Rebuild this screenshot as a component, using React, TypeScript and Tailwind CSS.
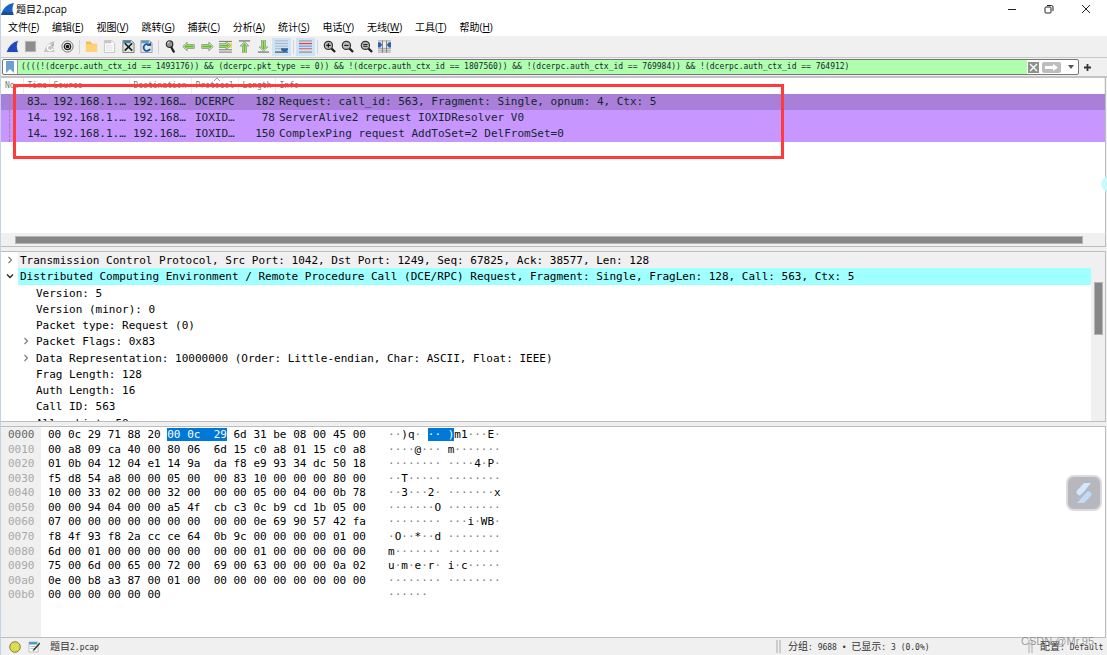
import React, { useState } from 'react';

const MENUS = [
  { label: '文件', hotkey: 'F' },
  { label: '编辑', hotkey: 'E' },
  { label: '视图', hotkey: 'V' },
  { label: '跳转', hotkey: 'G' },
  { label: '捕获', hotkey: 'C' },
  { label: '分析', hotkey: 'A' },
  { label: '统计', hotkey: 'S' },
  { label: '电话', hotkey: 'Y' },
  { label: '无线', hotkey: 'W' },
  { label: '工具', hotkey: 'T' },
  { label: '帮助', hotkey: 'H' },
];

const PACKETS = [
  { time: '83…', source: '192.168.1.…', dest: '192.168…', protocol: 'DCERPC', length: 182, info: 'Request: call_id: 563, Fragment: Single, opnum: 4, Ctx: 5' },
  { time: '14…', source: '192.168.1.…', dest: '192.168…', protocol: 'IOXID…', length: 78, info: 'ServerAlive2 request IOXIDResolver V0' },
  { time: '14…', source: '192.168.1.…', dest: '192.168…', protocol: 'IOXID…', length: 150, info: 'ComplexPing request AddToSet=2 DelFromSet=0' },
];

const FIELDS = [
  { text: 'Version: 5' },
  { text: 'Version (minor): 0' },
  { text: 'Packet type: Request (0)' },
  { text: 'Packet Flags: 0x83', expandable: true },
  { text: 'Data Representation: 10000000 (Order: Little-endian, Char: ASCII, Float: IEEE)', expandable: true },
  { text: 'Frag Length: 128' },
  { text: 'Auth Length: 16' },
  { text: 'Call ID: 563' },
  { text: 'Alloc hint: 50' },
];

const HEX_ROWS = [
  '00 0c 29 71 88 20 00 0c 29 6d 31 be 08 00 45 00',
  '00 a8 09 ca 40 00 80 06 6d 15 c0 a8 01 15 c0 a8',
  '01 0b 04 12 04 e1 14 9a da f8 e9 93 34 dc 50 18',
  'f5 d8 54 a8 00 00 05 00 00 83 10 00 00 00 80 00',
  '10 00 33 02 00 00 32 00 00 00 05 00 04 00 0b 78',
  '00 00 94 04 00 00 a5 4f cb c3 0c b9 cd 1b 05 00',
  '07 00 00 00 00 00 00 00 00 00 0e 69 90 57 42 fa',
  'f8 4f 93 f8 2a cc ce 64 0b 9c 00 00 00 00 01 00',
  '6d 00 01 00 00 00 00 00 00 00 01 00 00 00 00 00',
  '75 00 6d 00 65 00 72 00 69 00 63 00 00 00 0a 02',
  '0e 00 b8 a3 87 00 01 00 00 00 00 00 00 00 00 00',
  '00 00 00 00 00 00',
];

// Selected byte range, inclusive
const SEL_START = 6;
const SEL_END = 8;

const mono = "font-['DejaVu_Sans_Mono','Noto_Sans_CJK_SC',monospace]";
const ui = "font-['Open_Sans','Noto_Sans_CJK_SC',sans-serif]";

const Icon: React.FC<{ children: React.ReactNode }> = ({ children }) => (
  <svg viewBox="0 0 14 14" className="w-[13px] h-[13px]" fill="none" aria-hidden="true">{children}</svg>
);

const Tool: React.FC<{ label: string; active?: boolean; children: React.ReactNode }> = ({ label, active, children }) => (
  <button aria-label={label} className={`flex h-[18px] items-center justify-center ${active ? 'bg-[#cce4f7]' : 'hover:bg-[#dcebf7]'}`}>
    <Icon>{children}</Icon>
  </button>
);

const Divider = () => (
  <div className="flex w-[5px] justify-center"><div className="h-[14px] w-px bg-[#d4d4d4]" /></div>
);

const Lens: React.FC<{ sign: React.ReactNode }> = ({ sign }) => (
  <>
    <path d="M9 9l4 4" stroke="#222" strokeWidth="2.4" />
    <circle cx="5.8" cy="5.8" r="4.4" fill="#b9bdbd" stroke="#333" strokeWidth="1.3" />
    {sign}
  </>
);

// Green arrow with a pale bevel, turned to point the given way
const Arrow: React.FC<{ turn?: number }> = ({ turn = 0 }) => (
  <g transform={`rotate(${turn} 7 7)`}>
    <path d="M.8 7l4.700-4.500v2.500H13.200v4H5.500v2.500z" fill="#e4f5d6" stroke="#7c8a78" strokeWidth=".9" strokeLinejoin="round" />
    <path d="M2.200 7l2.600-2.500v1.500H12.400v2H4.800v1.500z" fill="#5cc412" />
  </g>
);

const Toolbar = () => (
  <div className="flex h-[22px] flex-none items-center border-b border-[#c8c8c8] bg-[#f0f0f0] pl-[2px]">
    <div className="grid w-[74px] grid-cols-4">
      <Tool label="Start capture">
        <path d="M0 13.500C2 6 6 2 14 0c-2.500 4-2.500 9 0 13.500z" fill="#fff" stroke="#ccc" strokeWidth=".5" />
        <path d="M.8 13C3 6.500 7 2.500 13 .8c-1.800 4-1.800 8 0 12.200z" fill="#2348bd" />
      </Tool>
      <Tool label="Stop capture"><rect x="1.500" y="1.500" width="11" height="11" fill="#8d8d8d" stroke="#b5b5b5" /></Tool>
      <Tool label="Restart capture">
        <path d="M1 13C3 6 7 2 12.500 1c-2 4-2 8 0 12z" fill="#c4c4c4" />
        <path d="M10 6.500A3 3 0 1 0 10.500 9.500" stroke="#fff" strokeWidth="1.500" />
        <path d="M8 6.500h3.500V3z" fill="#aaa" />
      </Tool>
      <Tool label="Capture options">
        <circle cx="7" cy="7" r="6" fill="#fafafa" stroke="#555" strokeWidth=".9" />
        <circle cx="7" cy="7" r="3.400" fill="#fff" stroke="#222" strokeWidth="1.500" />
        <circle cx="7" cy="7" r="1.900" fill="#111" />
      </Tool>
    </div>
    <Divider />
    <div className="grid w-[74px] grid-cols-4">
      <Tool label="Open">
        <path d="M1 1.500h5L7.500 4H13v8.500H1z" fill="#f3bd50" />
        <path d="M1 4.500h12v8H1z" fill="#ffd374" />
      </Tool>
      <Tool label="Save">
        <path d="M1.500 .5h8l3 3v10h-11z" fill="#fafafa" stroke="#c4c4c4" />
        <path d="M2 1h7v2.500H2z" fill="#c5c5c5" />
        <path d="M3.500 6h7M3.500 8.500h7M3.500 11h7" stroke="#cfcfcf" strokeDasharray="1.500 .7" />
      </Tool>
      <Tool label="Close">
        <path d="M1 .5h9l3 3v10H1z" fill="#dfe7e2" stroke="#777" />
        <path d="M1.500 1h8v2.500h-8z" fill="#3d86a8" />
        <path d="M3 3.500l8 8M11 3.500l-8 8" stroke="#1c1c1c" strokeWidth="1.800" />
      </Tool>
      <Tool label="Reload">
        <path d="M1 .5h9l3 3v10H1z" fill="#e3e8ec" stroke="#999" />
        <path d="M1.500 1h8v2.500h-8z" fill="#4f9bcb" />
        <path d="M10 5.500A3.600 3.600 0 1 0 10.800 9.500" stroke="#17569e" strokeWidth="1.900" />
        <path d="M7.500 6.500H12V2z" fill="#17569e" />
      </Tool>
    </div>
    <Divider />
    <div className="grid w-[130px] grid-cols-7">
      <Tool label="Find">
        <circle cx="6" cy="4.500" r="3.500" fill="#8e9292" stroke="#333" strokeWidth="1.300" />
        <path d="M4 4a2 2 0 0 1 2-2" stroke="#fff" strokeWidth=".9" />
        <path d="M8 8l2.500 4.500" stroke="#222" strokeWidth="2.400" strokeLinecap="round" />
      </Tool>
      <Tool label="Previous packet"><Arrow /></Tool>
      <Tool label="Next packet"><Arrow turn={180} /></Tool>
      <Tool label="Go to packet">
        <path d="M0 1.500h14M0 10.500h14M0 13h14" stroke="#6b6b6b" />
        <path d="M7 3h7v5.500H7z" fill="#ecd95c" />
        <g transform="translate(-1 -1)"><Arrow turn={180} /></g>
      </Tool>
      <Tool label="First packet">
        <path d="M1 1h12" stroke="#666" strokeWidth="1.200" />
        <g transform="translate(0 1)"><Arrow turn={90} /></g>
      </Tool>
      <Tool label="Last packet">
        <path d="M1 13h12" stroke="#666" strokeWidth="1.200" />
        <g transform="translate(0 -1)"><Arrow turn={270} /></g>
      </Tool>
      <Tool label="Auto scroll" active>
        <path d="M0 1h14M0 3.800h14M0 6.600h14" stroke="#a9b0b4" />
        <path d="M0 9.400h14" stroke="#a9b0b4" />
        <path d="M0 13h14" stroke="#414141" strokeWidth="1.200" />
        <path d="M6.500 9H14v1.800L11.500 13H9l-2.500-2.200z" fill="#2d63ad" />
      </Tool>
    </div>
    <Divider />
    <div className="grid w-[19px]">
      <Tool label="Colorize" active>
        <path d="M0 1h14" stroke="#8b8b8b" />
        <path d="M0 3.800h14" stroke="#e84040" strokeWidth="1.400" />
        <path d="M0 6.600h14" stroke="#6a7ccc" />
        <path d="M0 9.400h14" stroke="#e06060" strokeWidth="1.200" />
        <path d="M0 13h14" stroke="#777" />
      </Tool>
    </div>
    <Divider />
    <div className="grid w-[74px] grid-cols-4">
      <Tool label="Zoom in"><Lens sign={<path d="M3.500 5.800h4.600M5.800 3.500v4.600" stroke="#111" strokeWidth="1.200" />} /></Tool>
      <Tool label="Zoom out"><Lens sign={<path d="M3.500 5.800h4.600" stroke="#111" strokeWidth="1.200" />} /></Tool>
      <Tool label="Normal size"><Lens sign={<path d="M3.500 4.800h4.600M3.500 6.800h4.600" stroke="#111" />} /></Tool>
      <Tool label="Resize columns">
        <path d="M0 1h14M0 9h14M0 11h14M0 13h14" stroke="#9b9b9b" />
        <path d="M4.800 .5v13M9.200 .5v13" stroke="#777" />
        <path d="M0 2.500h2.500L4.500 5 2.500 8H0zM14 2.500h-2.500L9.500 5l2 3H14z" fill="#2d63ad" />
      </Tool>
    </div>
  </div>
);

const FilterBar = () => {
  const [filter, setFilter] = useState(
    '((((!(dcerpc.auth_ctx_id == 1493176)) && (dcerpc.pkt_type == 0)) && !(dcerpc.auth_ctx_id == 1807560)) && !(dcerpc.auth_ctx_id == 769984)) && !(dcerpc.auth_ctx_id == 764912)'
  );

  return (
    <div className="flex h-[20px] flex-none items-center border-b-2 border-[#c4c4c8] bg-[#f0f0f0] pl-px">
      <div className="flex h-[16px] flex-1 items-stretch rounded-[2px] border border-[#777] bg-white">
        <button aria-label="Bookmarks" className="flex w-[15px] items-center justify-center border-r border-[#999]">
          <svg viewBox="0 0 8 12" className="h-[12px] w-[8px]"><path d="M0 0h8v12L4 8 0 12z" fill="#6f9fd2" /></svg>
        </button>
        <input
          aria-label="Display filter"
          value={filter}
          onChange={(e) => setFilter(e.target.value)}
          className={`min-w-0 flex-1 bg-[#afffaf] px-[3px] text-[8px] text-[#12272e] outline-none ${mono}`}
        />
        <div className="flex items-center gap-[3px] pl-px">
          <button aria-label="Clear filter" className="flex h-[11px] w-[11px] items-center justify-center bg-[#8f918f]">
            <svg viewBox="0 0 11 11" className="h-[11px] w-[11px]"><path d="M2 2l7 7M9 2L2 9" stroke="#fff" strokeWidth="1.300" /></svg>
          </button>
          <button aria-label="Apply filter" className="h-[11px] w-[19px] rounded-[2px] bg-[#bdbdbd]">
            <svg viewBox="0 0 19 11" className="h-[11px] w-[19px]"><path d="M3 4h8V2l5 3.500L11 9V7H3z" fill="#fff" /></svg>
          </button>
          <button aria-label="Filter history" className="flex w-[14px] items-center justify-center">
            <svg viewBox="0 0 6 4" className="h-[4px] w-[6px]"><path d="M0 0h6L3 4z" fill="#555" /></svg>
          </button>
        </div>
      </div>
      <button aria-label="Add filter button" className="flex w-[28px] items-center pl-[5px]">
        <svg viewBox="0 0 7 7" className="h-[7px] w-[7px]"><path d="M3.500 0v7M0 3.500h7" stroke="#333" strokeWidth="1.800" /></svg>
      </button>
    </div>
  );
};

const PacketList = () => {
  const [selected, setSelected] = useState(0);

  return (
    <section className="flex h-[169px] flex-none flex-col border-b border-r border-[#bdbdbd]">
      <div className="relative flex-1 bg-white">
        <table className="w-full table-fixed border-collapse">
          <colgroup>
            <col className="w-[22px]" />
            <col className="w-[26px]" />
            <col className="w-[80px]" />
            <col className="w-[62px]" />
            <col className="w-[47px]" />
            <col className="w-[37px]" />
            <col />
          </colgroup>
          <thead className={`text-[8px] leading-[16px] text-[#777] ${mono}`}>
            <tr className="text-left *:h-[16px] *:overflow-hidden *:border-r *:border-[#ececec] *:p-0 *:pl-1 *:font-normal">
              <th>No.</th>
              <th>Time</th>
              <th>Source</th>
              <th>Destination</th>
              <th className="relative">
                Protocol
                <svg viewBox="0 0 6 3" className="absolute left-[22px] top-0 h-[3px] w-[6px]"><path d="M0 3l3-3 3 3" fill="none" stroke="#888" strokeWidth=".8" /></svg>
              </th>
              <th>Length</th>
              <th>Info</th>
            </tr>
          </thead>
          <tbody className={`text-[11px] leading-[16px] text-[#12272e] ${mono}`}>
            {PACKETS.map((p, i) => (
              <tr
                key={i}
                onClick={() => setSelected(i)}
                className={`whitespace-nowrap *:h-[16px] *:p-0 *:pl-1 ${selected === i ? 'bg-[#a97fd9]' : 'bg-[#c896ff]'}`}
              >
                <td><div className="ml-1 h-[16px] border-l border-dashed border-[#9a86b0]" /></td>
                <td>{p.time}</td>
                <td>{p.source}</td>
                <td>{p.dest}</td>
                <td>{p.protocol}</td>
                <td className="text-right">{p.length}</td>
                <td>{p.info}</td>
              </tr>
            ))}
          </tbody>
        </table>
        {/* annotation frame around the matching packets */}
        <div className="pointer-events-none absolute left-[12px] top-[6px] h-[75px] w-[771px] border-3 border-[#ff3b3b]" />
      </div>
      <div className="flex h-[13px] items-center bg-[#f0f0f0] pl-[14px] pr-[22px]">
        <div className="h-[8px] flex-1 border border-[#b5b5b5] bg-[#868686]" />
      </div>
    </section>
  );
};

const Chevron: React.FC<{ open?: boolean }> = ({ open }) => (
  <button aria-label={open ? 'Collapse' : 'Expand'} className="flex w-[8px] items-center justify-center">
    <svg viewBox="0 0 8 8" className="h-[8px] w-[8px]" fill="none">
      {open ? <path d="M1 2.500l3 3 3-3" stroke="#222" strokeWidth="1.300" /> : <path d="M2.500 1l3 3-3 3" stroke="#777" strokeWidth="1.100" />}
    </svg>
  </button>
);

const PacketDetails = () => (
  <section className="mt-1 flex h-[171px] flex-none border-y border-r border-[#bdbdbd] bg-white">
    <div className="min-w-0 flex-1 overflow-hidden">
      <div className={`grid h-[179px] auto-rows-fr whitespace-nowrap text-[11px] leading-[17px] text-black ${mono}`}>
        <div className="flex pl-[5px]">
          <Chevron />
          <span className="ml-1 flex-1 bg-[#f0f0f0] pl-[2px]">Transmission Control Protocol, Src Port: 1042, Dst Port: 1249, Seq: 67825, Ack: 38577, Len: 128</span>
        </div>
        <div className="flex pl-[5px]">
          <Chevron open />
          <span className="ml-1 flex-1 bg-[#a0ffff] pl-[2px]">Distributed Computing Environment / Remote Procedure Call (DCE/RPC) Request, Fragment: Single, FragLen: 128, Call: 563, Ctx: 5</span>
        </div>
        {FIELDS.map((f) => (
          <div key={f.text} className="flex pl-[21px]">
            {f.expandable ? <Chevron /> : <span className="w-[8px]" />}
            <span className="ml-[6px]">{f.text}</span>
          </div>
        ))}
      </div>
    </div>
    <div className="flex w-[14px] justify-center bg-[#f0f0f0] pt-[30px]">
      <div className="h-[53px] w-[9px] border border-[#b5b5b5] bg-[#868686]" />
    </div>
  </section>
);

const toChar = (byte: string) => {
  const code = parseInt(byte, 16);
  return code >= 0x20 && code < 0x7f ? String.fromCharCode(code) : '·';
};

const HexRow: React.FC<{ bytes: string[]; row: number }> = ({ bytes, row }) => {
  const picked = (i: number) => row === 0 && i >= SEL_START && i <= SEL_END;
  return (
    <div className="flex whitespace-pre">
      <span className={`w-[40px] bg-[#f0f0f0] pl-[7px] ${row === 0 ? 'text-[#666]' : 'text-[#a8a8a8]'}`}>
        {(row * 16).toString(16).padStart(4, '0')}
      </span>
      <span className="w-[340px] pl-[7px]">
        {bytes.map((b, i) => {
          const gap = i === 0 ? '' : i === 8 ? '  ' : ' ';
          return (
            <React.Fragment key={i}>
              <span className={picked(i) && picked(i - 1) ? 'bg-[#0078d7] text-white' : ''}>{gap}</span>
              <span className={picked(i) ? 'bg-[#0078d7] text-white' : ''}>{b}</span>
            </React.Fragment>
          );
        })}
      </span>
      <span className="pl-[7px]">
        {bytes.map((b, i) => {
          const c = toChar(b);
          const tone = picked(i) ? 'bg-[#0078d7] text-white' : c === '·' ? 'text-[#808080]' : '';
          return (
            <React.Fragment key={i}>
              {i === 8 && <span className={picked(7) && picked(8) ? 'bg-[#0078d7]' : ''}> </span>}
              <span className={tone}>{c}</span>
            </React.Fragment>
          );
        })}
      </span>
    </div>
  );
};

const HexView = () => (
  <section className={`mt-1 flex flex-1 flex-col border-y border-r border-[#bdbdbd] bg-white text-[11px] leading-[15px] text-black ${mono}`}>
    <div className="grid h-[175px] flex-none auto-rows-fr">
      {HEX_ROWS.map((line, i) => <HexRow key={i} row={i} bytes={line.split(' ')} />)}
    </div>
    <div className="w-[40px] flex-1 bg-[#f0f0f0]" />
  </section>
);

const Grip = () => <span className="h-[13px] w-[5px] border-x-2 border-[#cdcdcd]" />;

const StatusBar = () => (
  <footer className={`relative flex h-[17px] flex-none items-center text-[8px] text-[#333] ${mono}`}>
    <div className="flex flex-1 items-center pl-2">
      <svg viewBox="0 0 12 12" className="h-[12px] w-[12px]"><circle cx="6" cy="6" r="5.300" fill="#dcdc50" stroke="#77773a" strokeWidth=".9" /></svg>
      <svg viewBox="0 0 12 12" className="ml-[7px] h-[12px] w-[12px]">
        <path d="M1 1h9v10H1z" fill="#fff" stroke="#aaa" strokeWidth=".7" />
        <path d="M1 1h8v2.500H1z" fill="#3f9fd0" />
        <path d="M2.500 5.500h5M2.500 7.500h3" stroke="#aaa" strokeWidth=".8" />
        <path d="M11.500 1.500L5.500 8l-1 2 2-.8L12 3z" fill="#333" />
      </svg>
      <span className="ml-[10px]"><span className="text-[10px]">题目</span>2.pcap</span>
    </div>
    <div className="flex w-[252px] items-center gap-[7px]">
      <Grip />
      <span className="whitespace-pre"><span className="text-[10px]">分组</span>: 9688 • <span className="text-[10px]">已显示</span>: 3 (0.0%)</span>
    </div>
    <div className="flex w-[79px] items-center gap-[7px]">
      <Grip />
      <span className="whitespace-nowrap"><span className="text-[10px]">配置</span>: Default</span>
    </div>
    <span className="absolute -top-[4px] right-[13px] font-['Liberation_Sans',sans-serif] text-[11px] leading-[14px] text-[#777]/70">CSDN @Mr.95</span>
  </footer>
);

export default function App() {
  return (
    <div className="relative flex h-screen flex-col overflow-hidden border-l border-[#c3d3e3] bg-[#f0f0f0]">
      <header className={`flex h-[18px] flex-none items-center bg-white text-[10px] text-black ${ui}`}>
        <svg viewBox="0 0 13 12" className="h-[12px] w-[13px]"><path d="M0 12C2 5 6 1 13 0c-2 4-2 8-.5 12z" fill="#1b63c0" /><path d="M0 12c1-2 2-3 3-3.500 3 .8 6 .8 9 .5l.5 3z" fill="#174a9b" /></svg>
        <h1 className="ml-[2px] flex-1">题目2.pcap</h1>
        <div className="flex items-center gap-[27px] pr-4">
          <button aria-label="Minimize"><svg viewBox="0 0 10 10" className="h-[10px] w-[10px]"><path d="M1 5.500h8" stroke="#222" /></svg></button>
          <button aria-label="Restore">
            <svg viewBox="0 0 10 10" className="h-[10px] w-[10px]" fill="none" stroke="#222"><rect x="1" y="3" width="6" height="6" rx="1" /><path d="M3 1.500h4.500a1.500 1.500 0 0 1 1.500 1.500V7" /></svg>
          </button>
          <button aria-label="Close"><svg viewBox="0 0 10 10" className="h-[10px] w-[10px]"><path d="M1 1l8 8M9 1L1 9" stroke="#222" /></svg></button>
        </div>
      </header>

      <nav className={`flex h-[18px] flex-none items-center gap-[13px] bg-white pl-[7px] text-[10px] text-black ${ui}`}>
        {MENUS.map((m) => (
          <button key={m.hotkey} className="whitespace-nowrap">
            {m.label}(<span className="underline">{m.hotkey}</span>)
          </button>
        ))}
      </nav>

      <Toolbar />
      <FilterBar />
      <main className="flex flex-1 flex-col pr-px">
        <PacketList />
        <PacketDetails />
        <HexView />
      </main>
      <StatusBar />

      {/* floating helpers docked to the right edge */}
      <div className="absolute -right-[10px] top-[176px] h-[16px] w-[16px] rounded-full bg-[#ccfafa]" />
      <button aria-label="Assistant" className="absolute right-[5px] top-[475px] flex h-[36px] w-[36px] items-center justify-center rounded-[8px] border-2 border-[#dadbdf] bg-[#b7b8be]">
        <svg viewBox="0 0 16 20" className="h-[20px] w-[16px]">
          <path d="M8 0h7L8.500 8 4 12.500C0 11.500 0 8.500 1.500 7z" fill="#d3e8fc" />
          <path d="M8 20H1l6.500-7.500L12 8c4 1 4 4 2.500 5.500z" fill="#bedcfa" />
        </svg>
      </button>
    </div>
  );
}
